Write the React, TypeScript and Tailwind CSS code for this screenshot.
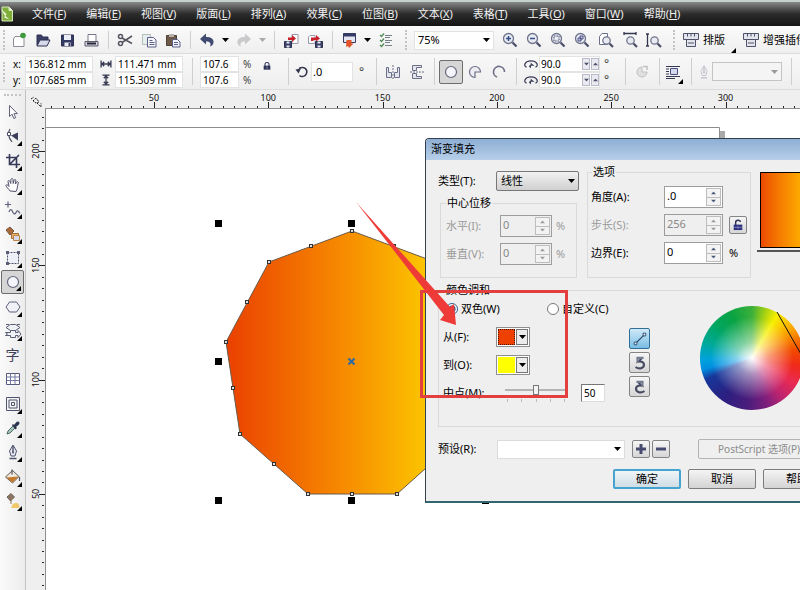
import type { ReactNode } from 'react';

const menus = [
  ['文件', 'F'],
  ['编辑', 'E'],
  ['视图', 'V'],
  ['版面', 'L'],
  ['排列', 'A'],
  ['效果', 'C'],
  ['位图', 'B'],
  ['文本', 'X'],
  ['表格', 'T'],
  ['工具', 'O'],
  ['窗口', 'W'],
  ['帮助', 'H'],
];

const icons: Record<string, ReactNode> = {
  new: (
    <>
      <path d="M5 5.500h7l2 2V15.500H3.500V8z" fill="#fff" stroke="#8b8b99" />
      <circle cx="13" cy="4.500" r="2.800" fill="#3d9a3a" />
    </>
  ),
  open: (
    <>
      <path d="M3 14.500V4h4.500l1 2H14v3" fill="#3a3f63" stroke="#2d3152" />
      <path d="M3 15 6 9h10l-3 6z" fill="#d7d9ea" stroke="#2d3152" />
    </>
  ),
  save: (
    <>
      <path d="M3.500 4h12v11h-12z" fill="#343a63" stroke="#2d3152" />
      <path d="M6 4h7v5H6zM6.500 11.500h6V15h-6z" fill="#eceef6" />
      <path d="M10.500 12h1.500v3h-1.500z" fill="#343a63" />
    </>
  ),
  print: (
    <>
      <path d="M6 10.500V3.500h8v7" fill="#fff" stroke="#77778a" />
      <path d="M3 10.500h13v4.500H3z" fill="#d5d5dc" stroke="#5b5b6e" />
      <path d="M5 12.500h9" stroke="#26263a" strokeWidth="2" />
    </>
  ),
  cut: (
    <g fill="none" stroke="#55555f" strokeWidth="1.500">
      <circle cx="4.500" cy="5.500" r="2" />
      <circle cx="4.500" cy="12.500" r="2" />
      <path d="M6 7 16 12.500M6 11.500 16 5" />
    </g>
  ),
  copy: (
    <>
      <path d="M2.500 3.500h8v10h-8z" fill="#e6efee" stroke="#b3bdbd" />
      <path d="M7.500 6.500h6l2.500 2.500v7H7.500z" fill="#f6f7fd" stroke="#5a5f87" />
      <path d="M9.500 9.500h3M9.500 11.500h5M9.500 13.500h5" stroke="#5a5f87" />
    </>
  ),
  paste: (
    <>
      <path d="M2.500 4.500h10v10h-10z" fill="#6f5a4a" stroke="#4e4038" />
      <path d="M5 3h5v3H5z" fill="#b9b3ad" />
      <path d="M8.500 8.500h5L16 11v5H8.500z" fill="#f1f2fb" stroke="#5a5f87" />
      <path d="M10 11.500h4M10 13.500h4" stroke="#5a5f87" />
    </>
  ),
  undo: <path d="M2 8 8 2.500V6c5 0 8 2 7.500 5.500-.2 2-1.500 3.500-3.500 4 1.500-3 0-5-4-5V13.500z" fill="#414a70" />,
  redo: <path d="M16 8 10 2.500V6c-5 0-8 2-7.500 5.500.2 2 1.500 3.500 3.500 4-1.500-3 0-5 4-5V13.500z" fill="#c9c9cb" />,
  import: (
    <>
      <path d="M10 3.500h6v9h-6z" fill="#fff" stroke="#9a9aaa" />
      <path d="M2.500 10.500h7v6h-7z" fill="#3a4068" stroke="#2d3152" />
      <path d="M4.500 10.500h3v2h-3zM4.500 14.500h3v2h-3z" fill="#e9eaf3" />
      <path d="M6 9V6.500h4V4l4 3.500-4 3.500V9z" fill="#c9202b" />
    </>
  ),
  export: (
    <>
      <path d="M4 4.500h5v8H2.500V6z" fill="#fff" stroke="#9a9aaa" />
      <path d="M9.500 10.500h7v6h-7z" fill="#3a4068" stroke="#2d3152" />
      <path d="M11.500 10.500h3v2h-3zM11.500 14.500h3v2h-3z" fill="#e9eaf3" />
      <path d="M5 10V6.500h5V4l4 3.500-4 3V9H7.500v1z" fill="#c9202b" />
    </>
  ),
  launch: (
    <>
      <path d="M3.500 2.500h12v9h-12z" fill="#e3e6f2" stroke="#343a63" />
      <path d="M3.500 2.500h12v3h-12z" fill="#343a63" />
      <path d="M6.500 9h5v3.500h2L9 17l-1-2-2 1z" fill="#e2552a" />
    </>
  ),
  options: (
    <g fill="none">
      <path d="M8 4.500h7M8 6.500h5M8 9.500h7M8 11.500h5M8 14.500h7" stroke="#75808a" />
      <path d="m3 4 1.500 1.500L7 2.500M3 9l1.500 1.500L7 7.500M3 14l1.500 1.500L7 12.500" stroke="#4f8a55" strokeWidth="1.300" />
    </g>
  ),
  pickTool: <path d="M5.500 2.500v11l2.500-2.300 1.800 4.300 1.900-.8-1.800-4.100h3.500z" fill="#fff" stroke="#60607a" />,
  shapeTool: (
    <>
      <path d="M6 2c-2 3-2 8 2 13" fill="none" stroke="#4c4c63" strokeWidth="1.200" />
      <path d="M3.500 5.500h3v3h-3z" fill="#fff" stroke="#4c4c63" />
      <path d="m7 8.500 7-3v8z" fill="#3b3f5c" />
    </>
  ),
  cropTool: <path d="M5.500 2v10.500H16M2 5.500h10.500V16M5.500 12.500 15 3" fill="none" stroke="#343958" strokeWidth="1.600" />,
  handTool: (
    <path
      d="M6 15c-1-2-4-4-4-5.500 0-1 1.300-1 2 0l1 1L4 5.500c0-1.300 1.500-1.300 2 0l.7 2L7 3.500c.2-1.300 1.700-1.300 2 0l.2 4 1-3.300c.5-1.200 1.800-.8 1.600.5L11.500 8l1.200-1.800c.8-1 2-.3 1.600.9C13 11 13.500 13 12 15.500z"
      fill="#fff"
      stroke="#50506a"
    />
  ),
  freehandTool: (
    <path d="M1 4.500h6M4 1.500v6M5 12c1-3 2.500-3 3.500-.5s2.500 3.500 3.500 1 2-2 4 1" fill="none" stroke="#5c6078" strokeWidth="1.200" />
  ),
  smartFill: (
    <>
      <path d="m2 5 4-3 4 4-4 4z" fill="#a86a3a" stroke="#77543c" />
      <path d="M7.500 8.500h7v5h-7z" fill="#e9b36d" stroke="#9d6b3c" />
      <path d="M9.500 10.500h6v5h-6z" fill="#d8d9e8" stroke="#b98546" />
    </>
  ),
  rectTool: (
    <>
      <path d="M3.500 3.500h11v11h-11z" fill="#eef0f7" stroke="#50536e" strokeDasharray="2 1" />
      <path d="M2 2h3v3H2zM13 2h3v3h-3zM2 13h3v3H2z" fill="#5b5e78" />
    </>
  ),
  ellipseTool: <circle cx="9" cy="9" r="5.500" fill="#f4f5fa" stroke="#65677d" strokeWidth="1.200" />,
  polygonTool: <path d="M5.500 4h7l3.500 5-3.500 5h-7L2 9z" fill="#f1f2f7" stroke="#5d607c" />,
  basicShapes: (
    <g fill="#f0f1f6" stroke="#5b5e78">
      <path d="M6.500 2.500h5L16 5.500l-4.500 3h-5L2 5.500z" />
      <path d="M1.500 10.500h5v-2h5v2H14V8.500l3 3.500-3 3.500v-2h-2.500v2h-5v-2h-5l2-1.500z" />
      <path d="M2 2.500h3M13 2.500h3" />
    </g>
  ),
  tableTool: (
    <>
      <path d="M2.500 3.500h13v11h-13z" fill="#fff" stroke="#55587a" />
      <path d="M2.500 7h13M2.500 10.500h13M6.500 3.500v11M11 3.500v11" stroke="#7376a0" />
    </>
  ),
  contour: (
    <g fill="none" stroke="#51546f">
      <path d="M2.500 2.500h13v13h-13zM5 5h8v8H5z" />
      <path d="M7.500 7.500h3v3h-3z" />
    </g>
  ),
  dropper: (
    <>
      <path d="m3 15 1-3 5-5 2 2-5 5z" fill="#a9c4bb" stroke="#4d6d68" />
      <path d="m8 6 1-1 1 1 2.500-3c2-1.500 4 .5 2.500 2.500L12 8l1 1-1.500 1.500z" fill="#2e334e" />
    </>
  ),
  outline: (
    <>
      <path d="M9 2 5.500 8 7 13h4l1.500-5z" fill="#e8e9f2" stroke="#4f526e" />
      <path d="M9 3v6M5.500 15.500h7" stroke="#4f526e" strokeWidth="1.400" />
      <circle cx="9" cy="9.500" r="1" fill="#4f526e" />
    </>
  ),
  bucket: (
    <>
      <path d="m1.500 9 7-6.500L15 8.500 8.500 15z" fill="#eee7df" stroke="#625950" />
      <path d="m2.500 9.500 12-1-6 6z" fill="#c57a2b" />
      <path d="M8 1.500v5M15.500 9v4" stroke="#54545e" strokeWidth="1.200" />
    </>
  ),
  interactiveFill: (
    <>
      <path d="m3 5 4-3.500 3.500 3.500-4 4z" fill="#8c7460" stroke="#6f6156" />
      <path d="M7.500 16c0-3.500 2-5 5-5 2 0 3 2 3 5z" fill="#efc86a" />
      <path d="M7 8v4" stroke="#8c7460" />
    </>
  ),
  widthArrow: (
    <path d="M3.500 5v8M14.500 5v8M4 9h10M7 6.500 4.500 9 7 11.500M11 6.500 13.500 9 11 11.500" fill="none" stroke="#34374f" strokeWidth="1.500" />
  ),
  heightArrow: (
    <path d="M5 3.500h8M5 14.500h8M9 4v10M6.500 7 9 4.500 11.500 7M6.500 11 9 13.500 11.500 11" fill="none" stroke="#34374f" strokeWidth="1.500" />
  ),
  lock: (
    <>
      <path d="M6 9V6c0-3 6-3 6 0v3" fill="none" stroke="#2d3157" strokeWidth="1.600" />
      <path d="M4 8.500h10v6H4z" fill="#2d3157" />
      <path d="M9 10v3" stroke="#cfd1e5" />
    </>
  ),
  unlock: (
    <>
      <path d="M6 9V5.500C6 2 12 2 12 5" fill="none" stroke="#2d3157" strokeWidth="1.800" />
      <path d="M3.500 8.500h11v7h-11z" fill="#2d3180" />
      <path d="M9 10v4M4 12h10" stroke="#8c90bb" />
    </>
  ),
  rotate: (
    <>
      <path d="M6 5.500c5-3 9 1 7.500 5-1 3-5 4-7 2" fill="none" stroke="#34374f" strokeWidth="1.500" />
      <path d="m2.500 6.500 5.500-1-2.500 5z" fill="#34374f" />
    </>
  ),
  mirrorH: (
    <g fill="#e2e4ee" stroke="#6c6f86">
      <path d="M2.500 4.500h2v5h3v5h-5zM15.500 4.500h-2v5h-3v5h5z" />
      <path d="M9 2v14" strokeDasharray="2 1" />
    </g>
  ),
  mirrorV: (
    <g fill="#e2e4ee" stroke="#6c6f86">
      <path d="M4.500 2.500h9v2h-5v3h-4zM4.500 15.500h9v-2h-5v-3h-4z" />
      <path d="M2 9h14" strokeDasharray="2 1" />
    </g>
  ),
  pie: <path d="M9 9h5.500A5.500 5.500 0 1 0 9 14.500z" fill="#eceef4" stroke="#6c6f86" strokeWidth="1.200" />,
  arc: <path d="M7 14a5.500 5.500 0 1 1 7.500-5" fill="none" stroke="#6c6f86" strokeWidth="1.600" />,
  angleStart: (
    <>
      <path d="M4 12.500c-4-1-2-7 5-7s9 6 5 7" fill="none" stroke="#3c3f58" strokeWidth="1.400" />
      <path d="m8 7 5 4H9v3L6.500 11.500 9 9z" fill="#3c3f58" />
    </>
  ),
  direction: (
    <>
      <path d="M9 9V4A5 5 0 1 0 14 9z" fill="#e0e0e0" stroke="#c0c0c0" />
      <path d="M10 3.500h4v3.500" fill="none" stroke="#c0c0c0" strokeWidth="1.500" />
    </>
  ),
  wrap: (
    <>
      <path d="M2 3.500h14M2 6h3M2 8.500h3M2 11h3M2 13.500h14M2 15.500h9" stroke="#34374f" />
      <path d="M6.500 5.500h7v6h-7z" fill="#d5d9ee" stroke="#4a4f83" />
    </>
  ),
  plugin: (
    <g fill="#e4e5ec" stroke="#4f5168">
      <path d="M1.500 2.500h15v6h-15z" />
      <path d="M5.500 2.500v3M9 2.500v3M12.500 2.500v3" />
      <path d="M4.500 8.500h9v7h-9zM6 12h6" />
    </g>
  ),
};

const zoomMarks: Record<string, ReactNode> = {
  in: <path d="M5 7.500h5M7.500 5v5" stroke="#34508a" strokeWidth="1.500" />,
  out: <path d="M5 7.500h5" stroke="#34508a" strokeWidth="1.500" />,
  selection: <path d="M5 5h5v5H5z" fill="none" stroke="#4a4f70" strokeDasharray="1.500 1" />,
  objects: <path d="M5 7h3v3H5zM7 5h3v3H7z" fill="#c8cce6" stroke="#4a4f83" />,
};

const Icon = ({ name, className = 'size-[18px]' }: { name: string; className?: string }) => (
  <svg viewBox="0 0 18 18" className={`${className} shrink-0`}>
    {icons[name]}
  </svg>
);

const ZoomIcon = ({ mark }: { mark: string }) => (
  <svg viewBox="0 0 18 18" className="size-[18px] shrink-0">
    {mark === 'page' && <path d="M2.500 13.500v-8L5 2.500h5.500v11z" fill="#fff" stroke="#6c6f88" />}
    {mark === 'width' && <path d="M3 2.500h12M3 1v3M15 1v3" stroke="#34374f" strokeWidth="1.300" />}
    {mark === 'height' && <path d="M2.500 3v12M1 3h3M1 15h3" stroke="#34374f" strokeWidth="1.300" />}
    {zoomMarks[mark] ? (
      <>
        <circle cx="7.500" cy="7.500" r="5" fill="#e9ebf3" stroke="#70748c" strokeWidth="1.300" />
        <path d="m11.500 11.500 4 4" stroke="#494d68" strokeWidth="2.200" />
        {zoomMarks[mark]}
      </>
    ) : (
      <>
        <circle cx="9.500" cy="9.500" r="3.700" fill="#e9ebf3" stroke="#70748c" strokeWidth="1.300" />
        <path d="m12.500 12.500 3.500 3.500" stroke="#494d68" strokeWidth="2.200" />
      </>
    )}
  </svg>
);

const Tool = ({ label, children }: { label: string; children: ReactNode }) => (
  <button aria-label={label} className="flex h-6 w-6 shrink-0 items-center justify-center">
    {children}
  </button>
);

const Caret = ({ className = 'text-black' }: { className?: string }) => (
  <svg viewBox="0 0 7 4" className={`h-1 w-[7px] shrink-0 ${className}`}>
    <path d="M0 0h7L3.500 4z" fill="currentColor" />
  </svg>
);

const CaretButton = ({ label, className }: { label: string; className?: string }) => (
  <button aria-label={label} className="flex h-6 w-[13px] shrink-0 items-center justify-center">
    <Caret className={className} />
  </button>
);

const Corner = ({ className }: { className: string }) => (
  <svg viewBox="0 0 5 5" className={`size-[5px] shrink-0 ${className}`}>
    <path d="M5 0v5H0z" />
  </svg>
);

const Separator = () => (
  <div className="flex w-2.5 shrink-0 justify-center self-stretch py-1">
    <div className="w-px bg-[#cfcfcf]" />
  </div>
);

const Grip = ({ className = 'w-2' }: { className?: string }) => (
  <div className={`${className} flex h-5 shrink-0 justify-center`}>
    <div className="border-l-2 border-dotted border-[#c4c4c4]" />
  </div>
);

const StandardBar = () => (
  <div className="flex h-7 shrink-0 items-center overflow-hidden border-b border-[#dcdcdc] bg-gradient-to-b from-[#fafafa] to-[#efefef] pt-px">
    <Grip className="w-[7px]" />
    <Tool label="新建"><Icon name="new" /></Tool>
    <Tool label="打开"><Icon name="open" /></Tool>
    <Tool label="保存"><Icon name="save" /></Tool>
    <Tool label="打印"><Icon name="print" /></Tool>
    <Separator />
    <Tool label="剪切"><Icon name="cut" /></Tool>
    <Tool label="复制"><Icon name="copy" /></Tool>
    <Tool label="粘贴"><Icon name="paste" /></Tool>
    <Separator />
    <Tool label="撤消"><Icon name="undo" /></Tool>
    <CaretButton label="撤消列表" />
    <Tool label="重做"><Icon name="redo" /></Tool>
    <CaretButton label="重做列表" className="text-[#aaaaaa]" />
    <Separator />
    <Tool label="导入"><Icon name="import" /></Tool>
    <Tool label="导出"><Icon name="export" /></Tool>
    <Separator />
    <Tool label="应用程序启动器"><Icon name="launch" /></Tool>
    <CaretButton label="启动器列表" />
    <Tool label="选项"><Icon name="options" /></Tool>
    <Grip className="w-4" />
    <div className="relative flex shrink-0 items-center">
      <select aria-label="缩放级别" className="h-[19px] w-20 appearance-none border border-[#e2e2e2] bg-white px-[3px] text-[11px] leading-4">
        <option>75%</option>
      </select>
      <div className="pointer-events-none absolute right-1"><Caret /></div>
    </div>
    <div className="ml-1 flex">
      <Tool label="放大"><ZoomIcon mark="in" /></Tool>
      <Tool label="缩小"><ZoomIcon mark="out" /></Tool>
      <Tool label="缩放选定对象"><ZoomIcon mark="selection" /></Tool>
      <Tool label="缩放全部对象"><ZoomIcon mark="objects" /></Tool>
      <Tool label="显示页面"><ZoomIcon mark="page" /></Tool>
      <Tool label="按页宽显示"><ZoomIcon mark="width" /></Tool>
      <Tool label="按页高显示"><ZoomIcon mark="height" /></Tool>
    </div>
    <Grip className="w-4" />
    <button className="flex shrink-0 items-center gap-[3px] text-[11px] leading-4">
      <Icon name="plugin" />
      排版
    </button>
    <Corner className="mx-1.5 self-end" />
    <button className="flex shrink-0 items-center gap-[3px] text-[11px] leading-4">
      <Icon name="plugin" />
      增强插件
    </button>
  </div>
);

const Field = ({ label, value, className }: { label: string; value: string; className: string }) => (
  <input
    aria-label={label}
    defaultValue={value}
    className={`${className} h-4 border border-[#e3e3e3] bg-white px-[2px] text-[10px] leading-3`}
  />
);

const AngleField = ({ label }: { label: string }) => (
  <div className="flex h-4 items-center border border-[#e3e3e3] bg-white">
    <input aria-label={label} defaultValue="90.0" className="w-[42px] px-px text-[10px] leading-3" />
    <button aria-label={`${label}减`} className="flex h-3 w-2 items-center justify-center border border-[#b9bac8] bg-[#e9eaf2]">
      <Caret className="scale-75 text-[#4d5068]" />
    </button>
    <button aria-label={`${label}加`} className="ml-px flex h-3 w-2 items-center justify-center border border-[#b9bac8] bg-[#e9eaf2]">
      <Caret className="rotate-180 scale-75 text-[#4d5068]" />
    </button>
  </div>
);

const PropertyBar = () => (
  <div className="flex h-9 shrink-0 items-center overflow-hidden border-b border-[#dcdcdc] bg-gradient-to-b from-[#f8f8f8] to-[#eeeeee]">
    <Grip className="w-[7px]" />
    <div className="ml-1.5 w-3 shrink-0 text-[10px] leading-4">
      <div>x:</div>
      <div>y:</div>
    </div>
    <div className="flex shrink-0 flex-col">
      <Field label="x" value="136.812 mm" className="w-[68px]" />
      <Field label="y" value="107.685 mm" className="w-[68px]" />
    </div>
    <div className="ml-1 flex w-[18px] shrink-0 flex-col items-center">
      <Icon name="widthArrow" className="size-4" />
      <Icon name="heightArrow" className="size-4" />
    </div>
    <div className="flex shrink-0 flex-col">
      <Field label="宽度" value="111.471 mm" className="w-[68px]" />
      <Field label="高度" value="115.309 mm" className="w-[68px]" />
    </div>
    <div className="ml-1 flex self-stretch"><Separator /></div>
    <div className="ml-[3px] flex shrink-0 flex-col">
      <Field label="水平缩放" value="107.6" className="w-[39px]" />
      <Field label="垂直缩放" value="107.6" className="w-[39px]" />
    </div>
    <div className="ml-1 w-[18px] shrink-0 text-[10px] leading-4 text-[#444444]">
      <div>%</div>
      <div>%</div>
    </div>
    <button aria-label="锁定比率" className="mb-3 shrink-0"><Icon name="lock" className="size-3" /></button>
    <div className="ml-2.5 flex self-stretch"><Separator /></div>
    <Icon name="rotate" />
    <input aria-label="旋转角度" defaultValue=".0" className="h-5 w-[42px] shrink-0 border border-[#e3e3e3] bg-white px-px text-[11px]" />
    <span className="ml-1.5 w-3 shrink-0 text-xs leading-4 text-[#444444]">°</span>
    <Separator />
    <Tool label="水平镜像"><Icon name="mirrorH" /></Tool>
    <Tool label="垂直镜像"><Icon name="mirrorV" /></Tool>
    <Separator />
    <button aria-label="椭圆形" className="flex size-6 shrink-0 items-center justify-center rounded-xs border border-[#6d6d6d] bg-[#d6d6d6]">
      <Icon name="ellipseTool" />
    </button>
    <Tool label="饼图"><Icon name="pie" /></Tool>
    <Tool label="弧"><Icon name="arc" /></Tool>
    <Separator />
    <div className="ml-0.5 flex w-4 shrink-0 flex-col">
      <Icon name="angleStart" className="size-4" />
      <Icon name="angleStart" className="size-4" />
    </div>
    <div className="flex shrink-0 flex-col">
      <AngleField label="起始角度" />
      <AngleField label="结束角度" />
    </div>
    <div className="ml-1 w-4 shrink-0 text-xs leading-4 text-[#444444]">
      <div>°</div>
      <div>°</div>
    </div>
    <Separator />
    <Tool label="更改方向"><Icon name="direction" /></Tool>
    <Separator />
    <button aria-label="文本换行" className="flex h-6 w-[22px] shrink-0 items-center">
      <Icon name="wrap" />
      <Corner className="-ml-1 self-end" />
    </button>
    <Separator />
    <Icon name="outline" className="size-4 opacity-30" />
    <div className="relative flex shrink-0 items-center">
      <select aria-label="轮廓宽度" disabled className="h-[19px] w-[70px] appearance-none border border-[#c4c4c4] bg-[#f4f4f4]" />
      <div className="pointer-events-none absolute right-1"><Caret className="text-[#9a9a9a]" /></div>
    </div>
    <div className="ml-1 flex self-stretch"><Separator /></div>
  </div>
);

const tools = [
  { name: 'pickTool', label: '选择' },
  { name: 'shapeTool', label: '形状', more: true },
  { name: 'cropTool', label: '裁剪', more: true },
  { name: 'handTool', label: '平移', more: true },
  { name: 'freehandTool', label: '手绘', more: true },
  { name: 'smartFill', label: '智能填充', more: true },
  { name: 'rectTool', label: '矩形', more: true },
  { name: 'ellipseTool', label: '椭圆形', more: true, active: true },
  { name: 'polygonTool', label: '多边形', more: true },
  { name: 'basicShapes', label: '基本形状', more: true },
  { name: 'text', label: '文本' },
  { name: 'tableTool', label: '表格' },
  { name: 'contour', label: '轮廓图', more: true },
  { name: 'dropper', label: '滴管', more: true },
  { name: 'outline', label: '轮廓笔', more: true },
  { name: 'bucket', label: '填充', more: true },
  { name: 'interactiveFill', label: '交互式填充', more: true },
];

const Toolbox = () => (
  <div className="w-[26px] shrink-0 border-r border-[#c3c3c3] bg-gradient-to-r from-[#fafafa] to-[#ececec]">
    <div className="mx-1 mt-1 h-1.5 border-t-2 border-dotted border-[#c4c4c4]" />
    <div className="flex h-[413px] flex-col justify-between">
      {tools.map(tool => (
        <button
          key={tool.name}
          aria-label={tool.label}
          className={
            tool.active
              ? 'relative ml-px flex h-6 w-[23px] items-center justify-center rounded-xs border border-[#6d6d6d] bg-[#d6d6d6]'
              : 'relative ml-px flex h-6 w-[23px] items-center justify-center'
          }
        >
          {tool.name === 'text' ? (
            <span className="text-sm leading-4 text-[#3f4258]">字</span>
          ) : (
            <Icon name={tool.name} className="size-[18px]" />
          )}
          {tool.more && <Corner className="absolute right-[2px] bottom-[2px]" />}
        </button>
      ))}
    </div>
  </div>
);

// 50 mm on the rulers is 114.3 px at this zoom level
const STEP = 11.43;

const HorizontalRuler = () => (
  <svg className="h-[18px] w-full shrink-0">
    <path d="m7 11 3-3 3 4-3 1zM11 13l4 4v-4M5 9l3-2" fill="none" stroke="#222" strokeDasharray="2 1" />
    {Array.from({ length: 160 }, (_, i) => {
      const x = Math.round(128 + (i - 9) * STEP);
      const major = (i - 9) % 10 === 0;
      return x < 20 ? null : <path key={i} d={major ? `M${x + 0.5} 12v6` : `M${x + 0.5} 16v2`} stroke="#222" />;
    })}
    {Array.from({ length: 14 }, (_, i) => (
      <text key={i} x={128 + i * STEP * 10} y="11" textAnchor="middle" fontSize="9" fill="#111">
        {(i + 1) * 50}
      </text>
    ))}
  </svg>
);

const VerticalRuler = () => (
  <svg className="h-full w-5 shrink-0 border-r border-[#8f8f8f]">
    {Array.from({ length: 90 }, (_, i) => {
      const y = Math.round(43 + (i - 3) * STEP);
      const major = (i - 3) % 10 === 0;
      return <path key={i} d={major ? `M13 ${y + 0.5}h6` : `M16 ${y + 0.5}h2`} stroke="#222" />;
    })}
    {[200, 150, 100, 50].map((mark, i) => (
      <text
        key={mark}
        transform={`translate(13 ${43 + i * STEP * 10}) rotate(-90)`}
        textAnchor="middle"
        fontSize="9"
        fill="#111"
      >
        {mark}
      </text>
    ))}
  </svg>
);

const nodes = [
  [306, 122], [265, 137], [223, 153], [201, 193], [180, 233], [187, 279], [194, 325], [228, 355],
  [262, 385], [306, 385], [351, 385], [348, 137],
];
const handles = [
  [172, 114], [305, 114], [172, 252], [172, 391], [305, 391], [439, 391],
];

const Drawing = () => (
  <svg className="h-full w-full">
    <defs>
      <linearGradient id="fountain">
        <stop offset="0" stopColor="#ea4000" />
        <stop offset="0.5" stopColor="#f79100" />
        <stop offset="0.8" stopColor="#fcc500" />
        <stop offset="1" stopColor="#fff000" />
      </linearGradient>
    </defs>
    <path d="M0 18.500h673.500V390" fill="none" stroke="#8d8d8d" />
    <path d="M674 22h5v368h-5z" fill="#a9a9a9" />
    <path
      d="M306 122 223 153 180 233 194 325 262 385H351L418 325 432 233 389 153z"
      fill="url(#fountain)"
      stroke="#6b5a48"
    />
    {nodes.map(([x, y]) => (
      <rect key={`${x}-${y}`} x={x - 1.5} y={y - 1.5} width="3" height="3" fill="#ddd" stroke="#333" />
    ))}
    {handles.map(([x, y]) => (
      <rect key={`${x}-${y}`} x={x - 3} y={y - 3} width="7" height="7" />
    ))}
    <path d="m302.500 249.500 6 6m0-6-6 6" stroke="#2b6aa8" strokeWidth="2" />
  </svg>
);

const Spinner = ({ id, value, disabled, className }: { id: string; value: string; disabled?: boolean; className: string }) => (
  <div className={`${className} flex h-[22px] shrink-0 border border-[#9c9c9c] p-px ${disabled ? 'bg-[#efefef] text-[#888888]' : 'bg-white'}`}>
    <input id={id} defaultValue={value} disabled={disabled} className="h-4 w-0 flex-1 px-px text-[11px] leading-4" />
    <div className="flex w-[15px] flex-col">
      <button
        aria-label="增加"
        disabled={disabled}
        className="flex flex-1 items-center justify-center border border-[#bdbdbd] bg-[#f3f3f3] text-[#4b5a7d] disabled:text-[#9a9a9a]"
      >
        <Caret className="rotate-180 scale-75" />
      </button>
      <button
        aria-label="减少"
        disabled={disabled}
        className="flex flex-1 items-center justify-center border border-t-0 border-[#bdbdbd] bg-[#f3f3f3] text-[#4b5a7d] disabled:text-[#9a9a9a]"
      >
        <Caret className="scale-75" />
      </button>
    </div>
  </div>
);

const ColorPicker = ({ id, swatch }: { id: string; swatch: string }) => (
  <button id={id} className="flex h-5 w-[34px] border border-[#8e8e8e] bg-white p-px">
    <span className={`${swatch} h-4 w-[17px]`} />
    <span className="ml-px flex h-4 flex-1 items-center justify-center border border-[#777777] bg-[#ececec]">
      <Caret />
    </span>
  </button>
);

const squareButton =
  'flex shrink-0 items-center justify-center rounded-xs border border-[#858585] bg-gradient-to-b from-[#f6f6f6] to-[#d6d6d6]';
const dialogButton =
  'h-5 w-[68px] shrink-0 rounded-xs border border-[#7d7d7d] bg-gradient-to-b from-[#f4f4f4] to-[#d4d4d4]';

const FountainFillDialog = () => (
  <div
    role="dialog"
    aria-label="渐变填充"
    className="absolute top-[29px] left-[379px] w-[419px] rounded-t border border-b-2 border-[#33414f] border-b-[#2f6670] bg-[#efefef] text-[11px] leading-4"
  >
    <h1 className="h-[21px] rounded-t bg-gradient-to-b from-[#8daed3] to-[#b7cfea] px-[5px] pt-[2px]">渐变填充</h1>
    <form className="px-3 pt-1 pb-3" onSubmit={e => e.preventDefault()}>
      <div className="flex">
        <div className="w-[141px] shrink-0 pt-[7px]">
          <div className="flex items-center">
            <label htmlFor="type" className="w-[58px]">类型(T):</label>
            <div className="relative flex items-center">
              <select id="type" className="h-5 w-[83px] appearance-none rounded-xs border border-[#777777] bg-gradient-to-b from-[#f2f2f2] to-[#d0d0d0] px-1">
                <option>线性</option>
              </select>
              <div className="pointer-events-none absolute right-1"><Caret /></div>
            </div>
          </div>
          <fieldset className="mx-[2px] mt-1 flex flex-col gap-1.5 border border-[#dadada] pt-1 pb-3 pl-[5px]">
            <legend className="px-px">中心位移</legend>
            <div className="flex items-center text-[#9a9a9a]">
              <label htmlFor="horizontal" className="w-[54px]">水平(I):</label>
              <Spinner id="horizontal" value="0" disabled className="w-[52px]" />
              <span className="ml-1">%</span>
            </div>
            <div className="flex items-center text-[#9a9a9a]">
              <label htmlFor="vertical" className="w-[54px]">垂直(V):</label>
              <Spinner id="vertical" value="0" disabled className="w-[52px]" />
              <span className="ml-1">%</span>
            </div>
          </fieldset>
        </div>
        <fieldset className="ml-2 flex w-[162px] shrink-0 flex-col gap-1.5 border border-[#dadada] px-[3px] pt-1.5 pb-3">
          <legend className="ml-px px-px">选项</legend>
          <div className="flex items-center">
            <label htmlFor="angle" className="w-[73px]">角度(A):</label>
            <Spinner id="angle" value=".0" className="w-[59px]" />
          </div>
          <div className="flex items-center">
            <label htmlFor="steps" className="w-[73px] text-[#9a9a9a]">步长(S):</label>
            <Spinner id="steps" value="256" disabled className="w-[59px]" />
            <button aria-label="解锁步长" className={`${squareButton} ml-1.5 size-[18px]`}>
              <Icon name="unlock" className="size-3.5" />
            </button>
          </div>
          <div className="flex items-center">
            <label htmlFor="edge" className="w-[73px]">边界(E):</label>
            <Spinner id="edge" value="0" className="w-[59px]" />
            <span className="ml-1.5">%</span>
          </div>
        </fieldset>
        <div className="mt-2 ml-1.5 h-20 flex-1 border-b-2 border-[#555555] pl-[3px]">
          <div className="h-[76px] border border-black bg-gradient-to-r from-[#ec4a00] to-[#ffe800]" />
        </div>
      </div>

      <fieldset className="mt-1 flex border border-[#dadada] pb-4 pl-1">
        <legend className="ml-0.5 px-px">颜色调和</legend>
        <div className="flex w-[186px] shrink-0 flex-col gap-2 pt-px">
          <div className="flex h-5 items-center">
            <label className="ml-[3px] flex w-[101px] items-center gap-[3px]">
              <input type="radio" name="blend" defaultChecked className="size-3 accent-[#2b5f8f]" />
              双色(W)
            </label>
            <label className="flex items-center gap-[3px]">
              <input type="radio" name="blend" className="size-3" />
              自定义(C)
            </label>
          </div>
          <div className="flex h-5 items-center">
            <label htmlFor="from" className="w-[53px]">从(F):</label>
            <ColorPicker id="from" swatch="bg-[#ee4000] border border-dotted border-[#4c1500]" />
          </div>
          <div className="flex h-5 items-center">
            <label htmlFor="to" className="w-[53px]">到(O):</label>
            <ColorPicker id="to" swatch="bg-[#ffff00]" />
          </div>
          <div className="flex h-5 items-center">
            <label htmlFor="midpoint" className="w-[62px]">中点(M):</label>
            <div className="flex w-[62px] flex-col gap-1">
              <input
                id="midpoint"
                type="range"
                className="h-2.5 w-full appearance-none bg-[linear-gradient(#b5b5b5,#b5b5b5)] bg-[length:100%_2px] bg-center bg-no-repeat [&::-webkit-slider-thumb]:h-2.5 [&::-webkit-slider-thumb]:w-1.5 [&::-webkit-slider-thumb]:appearance-none [&::-webkit-slider-thumb]:border [&::-webkit-slider-thumb]:border-[#777777] [&::-webkit-slider-thumb]:bg-[#f3f3f3]"
              />
              <div className="flex h-[3px] justify-between px-[2px]">
                <i className="w-px bg-[#bbbbbb]" />
                <i className="w-px bg-[#bbbbbb]" />
                <i className="w-px bg-[#bbbbbb]" />
                <i className="w-px bg-[#bbbbbb]" />
                <i className="w-px bg-[#bbbbbb]" />
              </div>
            </div>
            <input
              aria-label="中点值"
              defaultValue="50"
              className="ml-3.5 h-[18px] w-6 border border-[#dddddd] border-t-[#777777] border-l-[#777777] bg-white px-[2px] text-[10px] leading-4"
            />
          </div>
        </div>
        <div className="flex shrink-0 flex-col gap-[3px] pt-[30px]">
          <button aria-label="直线" className="flex size-[21px] items-center justify-center rounded-xs border border-[#2f6f98] bg-gradient-to-b from-[#cfe9f8] to-[#78bde3]">
            <svg viewBox="0 0 18 18" className="size-4">
              <path d="m4 14 10-10" stroke="#26406b" strokeWidth="1.300" />
              <path d="M2.500 12.500h3v3h-3zM12.500 2.500h3v3h-3z" fill="#e7f3fb" stroke="#26406b" />
            </svg>
          </button>
          <button aria-label="逆时针" className={`${squareButton} size-[21px]`}>
            <svg viewBox="0 0 18 18" className="size-4">
              <path d="M4 13.500c4 3 9.500 1.500 9.500-2.500 0-3-3-4-6-3.500l3.500-4" fill="none" stroke="#484c62" strokeWidth="2.400" />
              <path d="M5 2h8v2.500H7.500V9H5z" fill="#777b90" />
            </svg>
          </button>
          <button aria-label="顺时针" className={`${squareButton} size-[21px]`}>
            <svg viewBox="0 0 18 18" className="size-4">
              <path d="M14 13.500c-4 3-9.500 1.500-9.500-2.500 0-3 3-4 6-3.500L7 3.500" fill="none" stroke="#484c62" strokeWidth="2.400" />
              <path d="M13 2H5v2.500h5.500V9H13z" fill="#777b90" />
            </svg>
          </button>
        </div>
        <div className="relative mt-2 ml-[50px] size-[104px] shrink-0 rounded-full bg-[radial-gradient(circle,#ffffff_0%,#ffffff80_22%,#ffffff00_56%),conic-gradient(#3bb03a_0deg,#a5d112_16deg,#f8f000_30deg,#fba000_55deg,#f24a00_80deg,#f02a1a_100deg,#ea2a50_120deg,#c0256f_142deg,#7d1f7c_162deg,#4b1d7b_185deg,#2b1f80_215deg,#17379a_245deg,#008ee0_257deg,#00a2dc_268deg,#00a99a_288deg,#00a560_312deg,#0aa344_335deg,#3bb03a_360deg)]">
          <svg viewBox="0 0 104 104" className="absolute inset-0 size-[104px]">
            <path d="m77 6 25 44" stroke="#111" />
          </svg>
        </div>
      </fieldset>

      <div className="mt-3 flex h-5 items-center">
        <label htmlFor="preset" className="w-[59px] shrink-0">预设(R):</label>
        <div className="relative flex shrink-0 items-center">
          <select id="preset" className="h-[19px] w-32 appearance-none border border-[#dcdcdc] bg-white" />
          <div className="pointer-events-none absolute right-1"><Caret /></div>
        </div>
        <button aria-label="添加预设" className={`${squareButton} ml-[7px] size-[18px]`}>
          <svg viewBox="0 0 10 10" className="size-2.5"><path d="M5 0v10M0 5h10" stroke="#484b70" strokeWidth="3" /></svg>
        </button>
        <button aria-label="删除预设" className={`${squareButton} ml-0.5 size-[18px]`}>
          <svg viewBox="0 0 10 10" className="size-2.5"><path d="M0 5h10" stroke="#484b70" strokeWidth="3" /></svg>
        </button>
        <button disabled className="ml-7 h-5 w-[122px] shrink-0 rounded-xs border border-[#b4b4b4] text-[10px] text-[#8c8c8c]">
          PostScript 选项(P)
        </button>
      </div>

      <div className="mt-2.5 flex justify-end gap-[7px]">
        <button className="h-5 w-[68px] shrink-0 rounded-xs border-2 border-[#45a3cf] bg-gradient-to-b from-[#f0f5f8] to-[#cfdde5] leading-4">
          确定
        </button>
        <button className={dialogButton}>取消</button>
        <button className={dialogButton}>帮助</button>
      </div>
    </form>
  </div>
);

const Annotation = () => (
  <svg className="pointer-events-none absolute inset-0 h-full w-full">
    <path d="M375.500 182.500h145v105h-145z" fill="none" stroke="#e23f3f" strokeWidth="3" />
    <path d="M310 93 404 198 408 195 410 216 394 211 398 206z" fill="#ee3b38" />
  </svg>
);

export default function App() {
  return (
    <div className="flex h-screen flex-col overflow-hidden bg-[#efefef] font-['Noto_Sans','Noto_Sans_CJK_SC',sans-serif] text-black">
      <header className="flex h-[26px] shrink-0 items-center overflow-hidden border-t-2 border-[#c5d2cf] bg-gradient-to-b from-[#8a8a8a] via-[#2c2c2c] via-50% to-[#141414] text-[11px] text-[#f2f2f2]">
        <svg viewBox="0 0 14 16" className="mr-[18px] h-4 w-3.5 shrink-0">
          <path d="M2 1h7l3.500 3.500V15H2z" fill="#7fae3a" stroke="#d8e8c0" />
          <path d="M9 1v3.500h3.500" fill="#eef6dd" stroke="#d8e8c0" />
          <path d="m1 3 5.500 5L5.500 10l4 3.500L4 11.500l1-1.500z" fill="#eef6dd" />
        </svg>
        <nav className="flex shrink-0 gap-5">
          {menus.map(([name, key]) => (
            <a key={key} href={`#${key}`} className="leading-4">
              {name}(<u>{key}</u>)
            </a>
          ))}
        </nav>
      </header>
      <StandardBar />
      <PropertyBar />
      <div className="flex min-h-0 flex-1">
        <Toolbox />
        <div className="flex min-w-0 flex-1 flex-col">
          <HorizontalRuler />
          <div className="flex min-h-0 flex-1">
            <VerticalRuler />
            <main className="relative min-w-0 flex-1 overflow-hidden border-t border-[#8f8f8f] bg-white">
              <Drawing />
              <FountainFillDialog />
              <Annotation />
            </main>
          </div>
        </div>
      </div>
    </div>
  );
}
